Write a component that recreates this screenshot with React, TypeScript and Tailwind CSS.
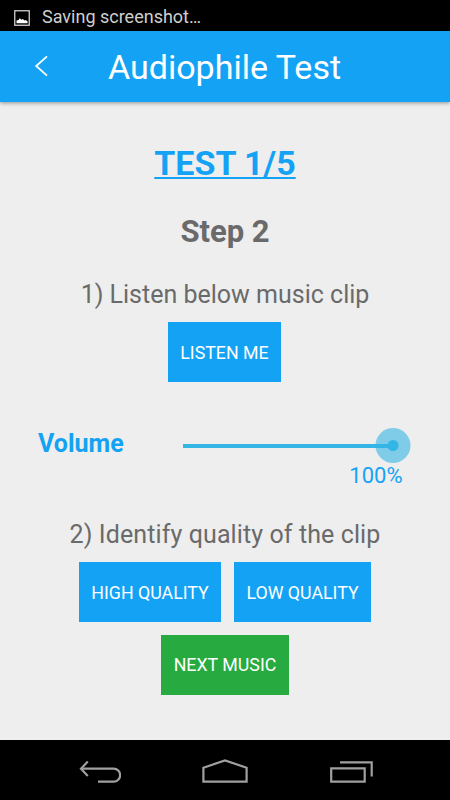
import React, { useState } from "react";

const answers = [
  { id: "high", name: "HIGH QUALITY", style: "w-[142px]" },
  { id: "low", name: "LOW QUALITY", style: "w-[137px]" },
];

const StatusBar = () => (
  <div className="flex h-[31px] items-center gap-3 bg-black pl-3.5 pt-[3px] text-[#cfcfcf]">
    <svg className="mt-px" width="16" height="16" viewBox="0 0 16 16" fill="none">
      <rect x="0.75" y="0.75" width="14.5" height="14.5" stroke="currentColor" strokeWidth="1.3" />
      <path d="M2.5 13.3V10.6l2-.7 1.2-1.6 1.9 1.4 1.3-.7 1.6 1.6 1-.6 2 1.2v2.1z" fill="#fff" />
    </svg>
    <span className="text-[18px] leading-5">Saving screenshot…</span>
  </div>
);

const Header = () => (
  <header className="relative z-10 flex h-[71px] items-center bg-[#14a3f4] text-white shadow-[0_1px_4px_rgba(0,0,0,0.4)]">
    <button className="ml-[34px] w-[74px] pb-0.5" aria-label="Back">
      <svg width="15" height="22" viewBox="0 0 15 22" fill="none">
        <path d="M13 1.3 2.2 11 13 20.7" stroke="currentColor" strokeWidth="1.8" />
      </svg>
    </button>
    <h1 className="text-[34px] leading-10">Audiophile Test</h1>
  </header>
);

const VolumeSlider = ({ volume }: { volume: number }) => (
  <div className="mt-[46px] flex h-[64px] w-full pl-[38px]">
    <span className="w-[144.5px] text-[25px] font-bold leading-8 text-[#14a3f4]">Volume</span>
    <div className="w-[227px]">
      <div className="relative h-[35px] w-[210px]">
        <div
          className="absolute top-[15.5px] h-1 bg-[#33b5e5]"
          style={{ width: `${volume}%` }}
        />
        <div
          className="absolute top-0 flex size-[35px] -translate-x-1/2 items-center justify-center rounded-full bg-[#33b5e5]/60"
          style={{ left: `${volume}%` }}
        >
          <div className="size-[11px] rounded-full bg-[#33b5e5]" />
        </div>
      </div>
      <p className="pr-[7px] text-right text-[22px] leading-[26px] text-[#14a3f4]">{volume}%</p>
    </div>
  </div>
);

const NavigationBar = () => (
  <nav className="flex h-[60px] items-start justify-between bg-black pl-[79px] pr-[77px] pt-[18px] text-[#a0a0a0]">
    <svg width="42" height="26" viewBox="0 0 42 26" fill="none" stroke="currentColor" strokeWidth="2.2">
      <path d="M2 10.7h32.7a6.4 6.4 0 0 1 0 12.9H19" />
      <path d="M8.8 3.5 2 10.7l6.8 7.2" />
    </svg>
    <svg className="-ml-px" width="46" height="26" viewBox="0 0 46 26" fill="none" stroke="currentColor" strokeWidth="2.2">
      <path d="M1.4 23.6V9.7L23 2.4l21.6 7.3v13.9z" />
    </svg>
    <svg width="43" height="26" viewBox="0 0 43 26" fill="none" stroke="currentColor" strokeWidth="2.2">
      <path d="M1.2 10.4h33.5v13.2H1.2zM10 4.4h31.7v14" />
    </svg>
  </nav>
);

const App = () => {
  const [volume] = useState(100);

  return (
    <div className="flex h-[800px] w-[450px] flex-col bg-[#eeeeee] font-['Roboto',sans-serif]">
      <StatusBar />
      <Header />
      <main className="flex flex-1 flex-col items-center pt-[41px] text-[#6a6a6a]">
        <h2 className="h-10 text-[34px] font-bold leading-10 text-[#14a3f4] underline decoration-2 underline-offset-2">
          TEST 1/5
        </h2>
        <h3 className="mt-[29px] text-[31px] font-bold leading-10">Step 2</h3>
        <p className="mt-[27px] text-[25px] leading-8">1) Listen below music clip</p>
        <button className="mr-px mt-[11px] h-[60px] w-[113px] bg-[#14a3f4] pt-0.5 text-[17.8px] text-white">LISTEN ME</button>
        <VolumeSlider volume={volume} />
        <p className="mt-[27px] text-[25px] leading-8 tracking-[0.1px]">2) Identify quality of the clip</p>
        <div className="mt-[11px] flex gap-[13px]">
          {answers.map((answer) => (
            <button key={answer.id} className={`h-[60px] bg-[#14a3f4] pt-0.5 text-[17.8px] text-white ${answer.style}`}>
              {answer.name}
            </button>
          ))}
        </div>
        <button className="mt-[12.5px] h-[60px] w-32 bg-[#27ab40] pt-0.5 text-[17.8px] text-white">NEXT MUSIC</button>
      </main>
      <NavigationBar />
    </div>
  );
};

export default App;
